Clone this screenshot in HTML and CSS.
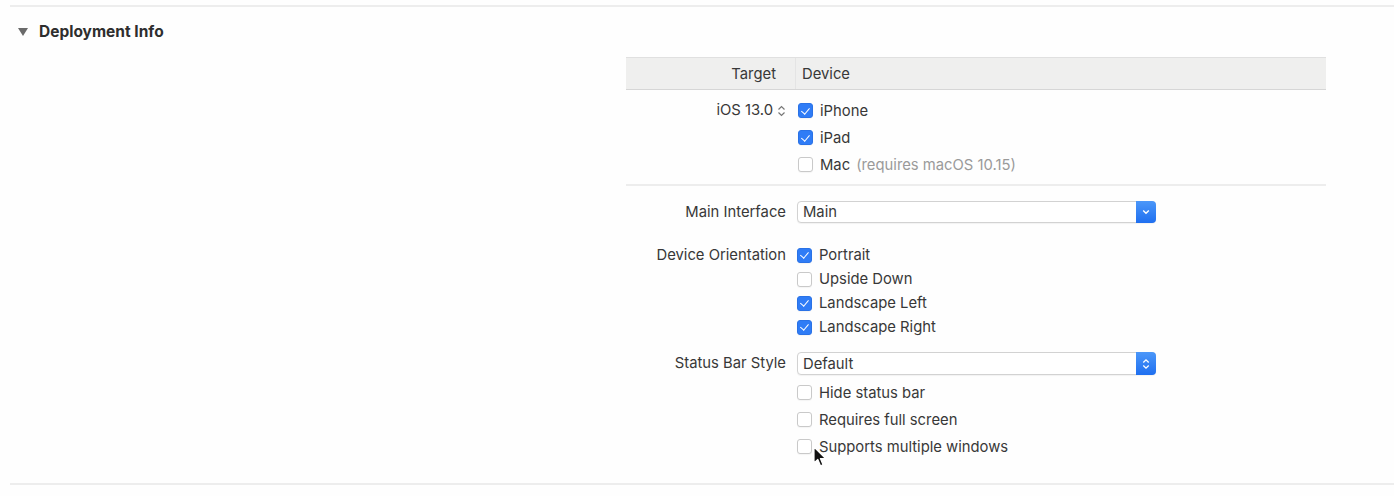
FILE: index.html
```html
<!DOCTYPE html>
<html>
<head>
<meta charset="utf-8">
<link rel="stylesheet" href="styles.css">
</head>
<body>
<div class="page">
  <div class="rule top"></div>
  <div class="section-head">
    <span class="disclosure"></span>
    <span class="section-title">Deployment Info</span>
  </div>
  <div class="table">
    <div class="thead">
      <div class="th th-label">Target</div>
      <div class="th th-value">Device</div>
    </div>
    <div class="group g1">
      <div class="label">iOS 13.0<svg class="stepper" width="9" height="12" viewBox="0 0 9 12"><path d="M1.5 4.5 L4.5 1.5 L7.5 4.5 M1.5 7.5 L4.5 10.5 L7.5 7.5" fill="none" stroke="#777" stroke-width="1.2"/></svg></div>
      <div class="values">
        <div class="cb-row"><span class="cb on"></span><span>iPhone</span></div>
        <div class="cb-row"><span class="cb on"></span><span>iPad</span></div>
        <div class="cb-row"><span class="cb"></span><span>Mac</span><span class="note">(requires macOS 10.15)</span></div>
      </div>
    </div>
    <div class="group g2">
      <div class="field first">
        <div class="label">Main Interface</div>
        <div class="select">
          <span class="select-text">Main</span>
          <span class="select-btn"><svg width="8" height="6" viewBox="0 0 8 6"><path d="M1.2 1.5 L4 4.3 L6.8 1.5" fill="none" stroke="#fff" stroke-width="1.4"/></svg></span>
        </div>
      </div>
      <div class="field orient">
        <div class="label">Device Orientation</div>
        <div class="values">
          <div class="cb-row tight"><span class="cb on"></span><span>Portrait</span></div>
          <div class="cb-row tight"><span class="cb"></span><span>Upside Down</span></div>
          <div class="cb-row tight"><span class="cb on"></span><span>Landscape Left</span></div>
          <div class="cb-row tight"><span class="cb on"></span><span>Landscape Right</span></div>
        </div>
      </div>
      <div class="field status">
        <div class="label">Status Bar Style</div>
        <div class="select">
          <span class="select-text">Default</span>
          <span class="select-btn"><svg width="8" height="12" viewBox="0 0 8 12"><path d="M1.3 4.5 L4 1.8 L6.7 4.5 M1.3 7.5 L4 10.2 L6.7 7.5" fill="none" stroke="#fff" stroke-width="1.3"/></svg></span>
        </div>
      </div>
      <div class="field extra">
        <div class="label"></div>
        <div class="values">
          <div class="cb-row"><span class="cb"></span><span>Hide status bar</span></div>
          <div class="cb-row"><span class="cb"></span><span>Requires full screen</span></div>
          <div class="cb-row"><span class="cb"></span><span>Supports multiple windows</span></div>
        </div>
      </div>
    </div>
  </div>
  <div class="rule bottom"></div>
  <svg class="cursor" width="14" height="22" viewBox="0 0 14 22"><path d="M1 1 L1 17 L4.8 13.4 L7.5 19.8 L10 18.7 L7.4 12.5 L12.6 12.5 Z" fill="#111" stroke="#fff" stroke-width="1.2" stroke-linejoin="round"/></svg>
</div>
</body>
</html>
```
FILE: styles.css
```css
html, body {
  margin: 0;
  padding: 0;
  background: #fefefe;
}
body {
  font-family: Inter, "Liberation Sans", Arial, sans-serif;
  font-size: 14.8px;
  color: #383838;
  width: 1394px;
  height: 496px;
  overflow: hidden;
}
.page {
  position: relative;
  padding-top: 5px;
}
.rule {
  height: 2px;
  background: #ededed;
  margin-left: 10px;
}
.section-head {
  display: flex;
  align-items: center;
  height: 22px;
  margin-top: 13px;
  padding-left: 18px;
}
.disclosure {
  width: 0;
  height: 0;
  border-left: 5px solid transparent;
  border-right: 5px solid transparent;
  border-top: 8px solid #6a6a6a;
  margin-right: 11px;
  margin-top: 1px;
}
.section-title {
  font-weight: 700;
  font-size: 15.5px;
  color: #2e2e2e;
}
.table {
  margin-left: 626px;
  width: 700px;
  margin-top: 15px;
}
.thead {
  display: grid;
  grid-template-columns: 170px 1fr;
  height: 31px;
  background: #efefee;
  border-top: 1px solid #e0e0e0;
  border-bottom: 1px solid #d6d6d6;
  align-items: center;
}
.th-label {
  padding-right: 19px;
  height: 100%;
  display: flex;
  align-items: center;
  justify-content: flex-end;
  border-right: 1px solid #e4e4e4;
  box-sizing: border-box;
}
.th-value {
  padding-left: 6px;
}
.group {
  display: grid;
  grid-template-columns: 160px 1fr;
  column-gap: 12px;
}
.g1 {
  padding: 7px 0 6px;
  border-bottom: 2px solid #ededed;
}
.g2 {
  display: flex;
  flex-direction: column;
  padding-top: 15px;
}
.field {
  display: grid;
  grid-template-columns: 160px 1fr;
  column-gap: 11px;
  align-items: start;
}
.label {
  text-align: right;
  height: 27px;
  line-height: 27px;
  white-space: nowrap;
}
.g1 .label {
  display: flex;
  align-items: center;
  justify-content: flex-end;
  gap: 4px;
}
.stepper {
  display: block;
}
.values {
  display: flex;
  flex-direction: column;
}
.cb-row {
  display: flex;
  align-items: center;
  height: 27px;
  gap: 7px;
  white-space: nowrap;
}
.cb-row.tight {
  height: 24px;
}
.cb {
  width: 13px;
  height: 13px;
  border: 1px solid #c9c9c9;
  border-radius: 3px;
  background: #fff;
  flex: none;
  position: relative;
  box-shadow: 0 1px 1px rgba(0,0,0,0.04);
}
.cb.on {
  background: #2f7cf6;
  border-color: #2a72e6;
}
.cb.on::after {
  content: "";
  position: absolute;
  left: 4px;
  top: 1.5px;
  width: 3.5px;
  height: 7px;
  border-right: 1.8px solid #fff;
  border-bottom: 1.8px solid #fff;
  transform: rotate(40deg);
}
.note {
  color: #9a9a9a;
  margin-left: -1px;
}
.select {
  width: 359px;
  height: 22px;
  border: 1px solid #d2d2d2;
  border-radius: 4px;
  background: #fff;
  box-sizing: border-box;
  display: flex;
  align-items: center;
  justify-content: space-between;
  box-shadow: 0 1px 1px rgba(0,0,0,0.05);
}
.select-text {
  padding-left: 5px;
}
.select-btn {
  width: 20px;
  height: calc(100% + 2px);
  margin-right: -1px;
  border-radius: 0 4px 4px 0;
  background: linear-gradient(#4b97f9, #1f6ff0);
  display: flex;
  align-items: center;
  justify-content: center;
}
.first .label {
  height: 22px;
  line-height: 22px;
}
.orient {
  margin-top: 20px;
}
.orient .label {
  height: 24px;
  line-height: 24px;
}
.status {
  margin-top: 13px;
}
.status .label {
  height: 23px;
  line-height: 23px;
}
.status .select {
  height: 23px;
}
.extra {
  margin-top: 4px;
}
.extra .label {
  height: 1px;
}
.rule.bottom {
  position: absolute;
  left: 0;
  right: 0;
  top: 483px;
}
.cursor {
  position: absolute;
  left: 813px;
  top: 446px;
}
```
